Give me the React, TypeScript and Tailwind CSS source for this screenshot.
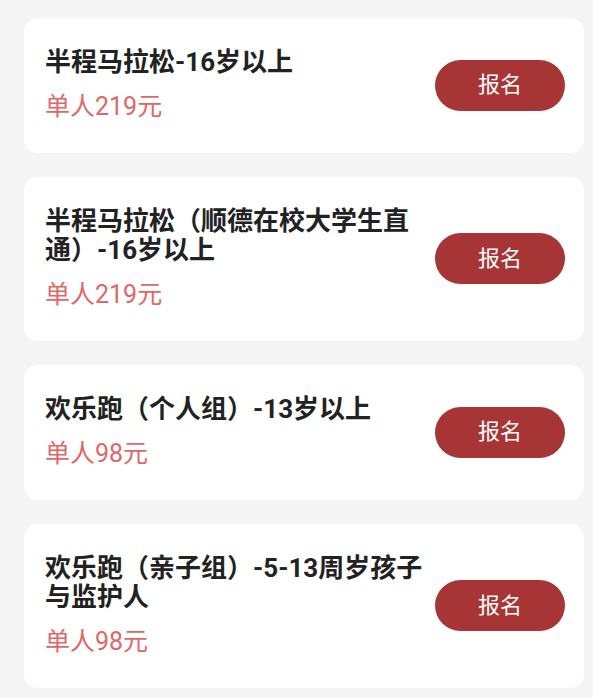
import React from "react";

const items = [
  { title: "半程马拉松-16岁以上", price: "单人219元" },
  { title: "半程马拉松（顺德在校大学生直通）-16岁以上", price: "单人219元" },
  { title: "欢乐跑（个人组）-13岁以上", price: "单人98元" },
  { title: "欢乐跑（亲子组）-5-13周岁孩子与监护人", price: "单人98元" },
];

export default function App() {
  return (
    <div
      className="min-h-[698px] w-[593px] bg-[#f5f5f5] pt-[18px] pl-[24px] pr-[9px] flex flex-col gap-[24px]"
      style={{ fontFamily: 'Roboto, "Noto Sans CJK SC", sans-serif' }}
    >
      {items.map((it, i) => (
        <div
          key={i}
          className="bg-white rounded-[14px] flex items-center pl-[21px] pr-[19px] pt-[30px] pb-[31px]"
        >
          <div className="flex-1 min-w-0 pr-[12px] flex flex-col gap-[15px]">
            <div className="text-[26px] leading-[29px] font-bold text-[#222222]">
              {it.title}
            </div>
            <div className="text-[25px] leading-[30px] text-[#e06767]">
              {it.price}
            </div>
          </div>
          <button className="w-[130px] h-[51px] shrink-0 rounded-full bg-[#a83535] text-white text-[22px] leading-none flex items-center justify-center">
            报名
          </button>
        </div>
      ))}
    </div>
  );
}
